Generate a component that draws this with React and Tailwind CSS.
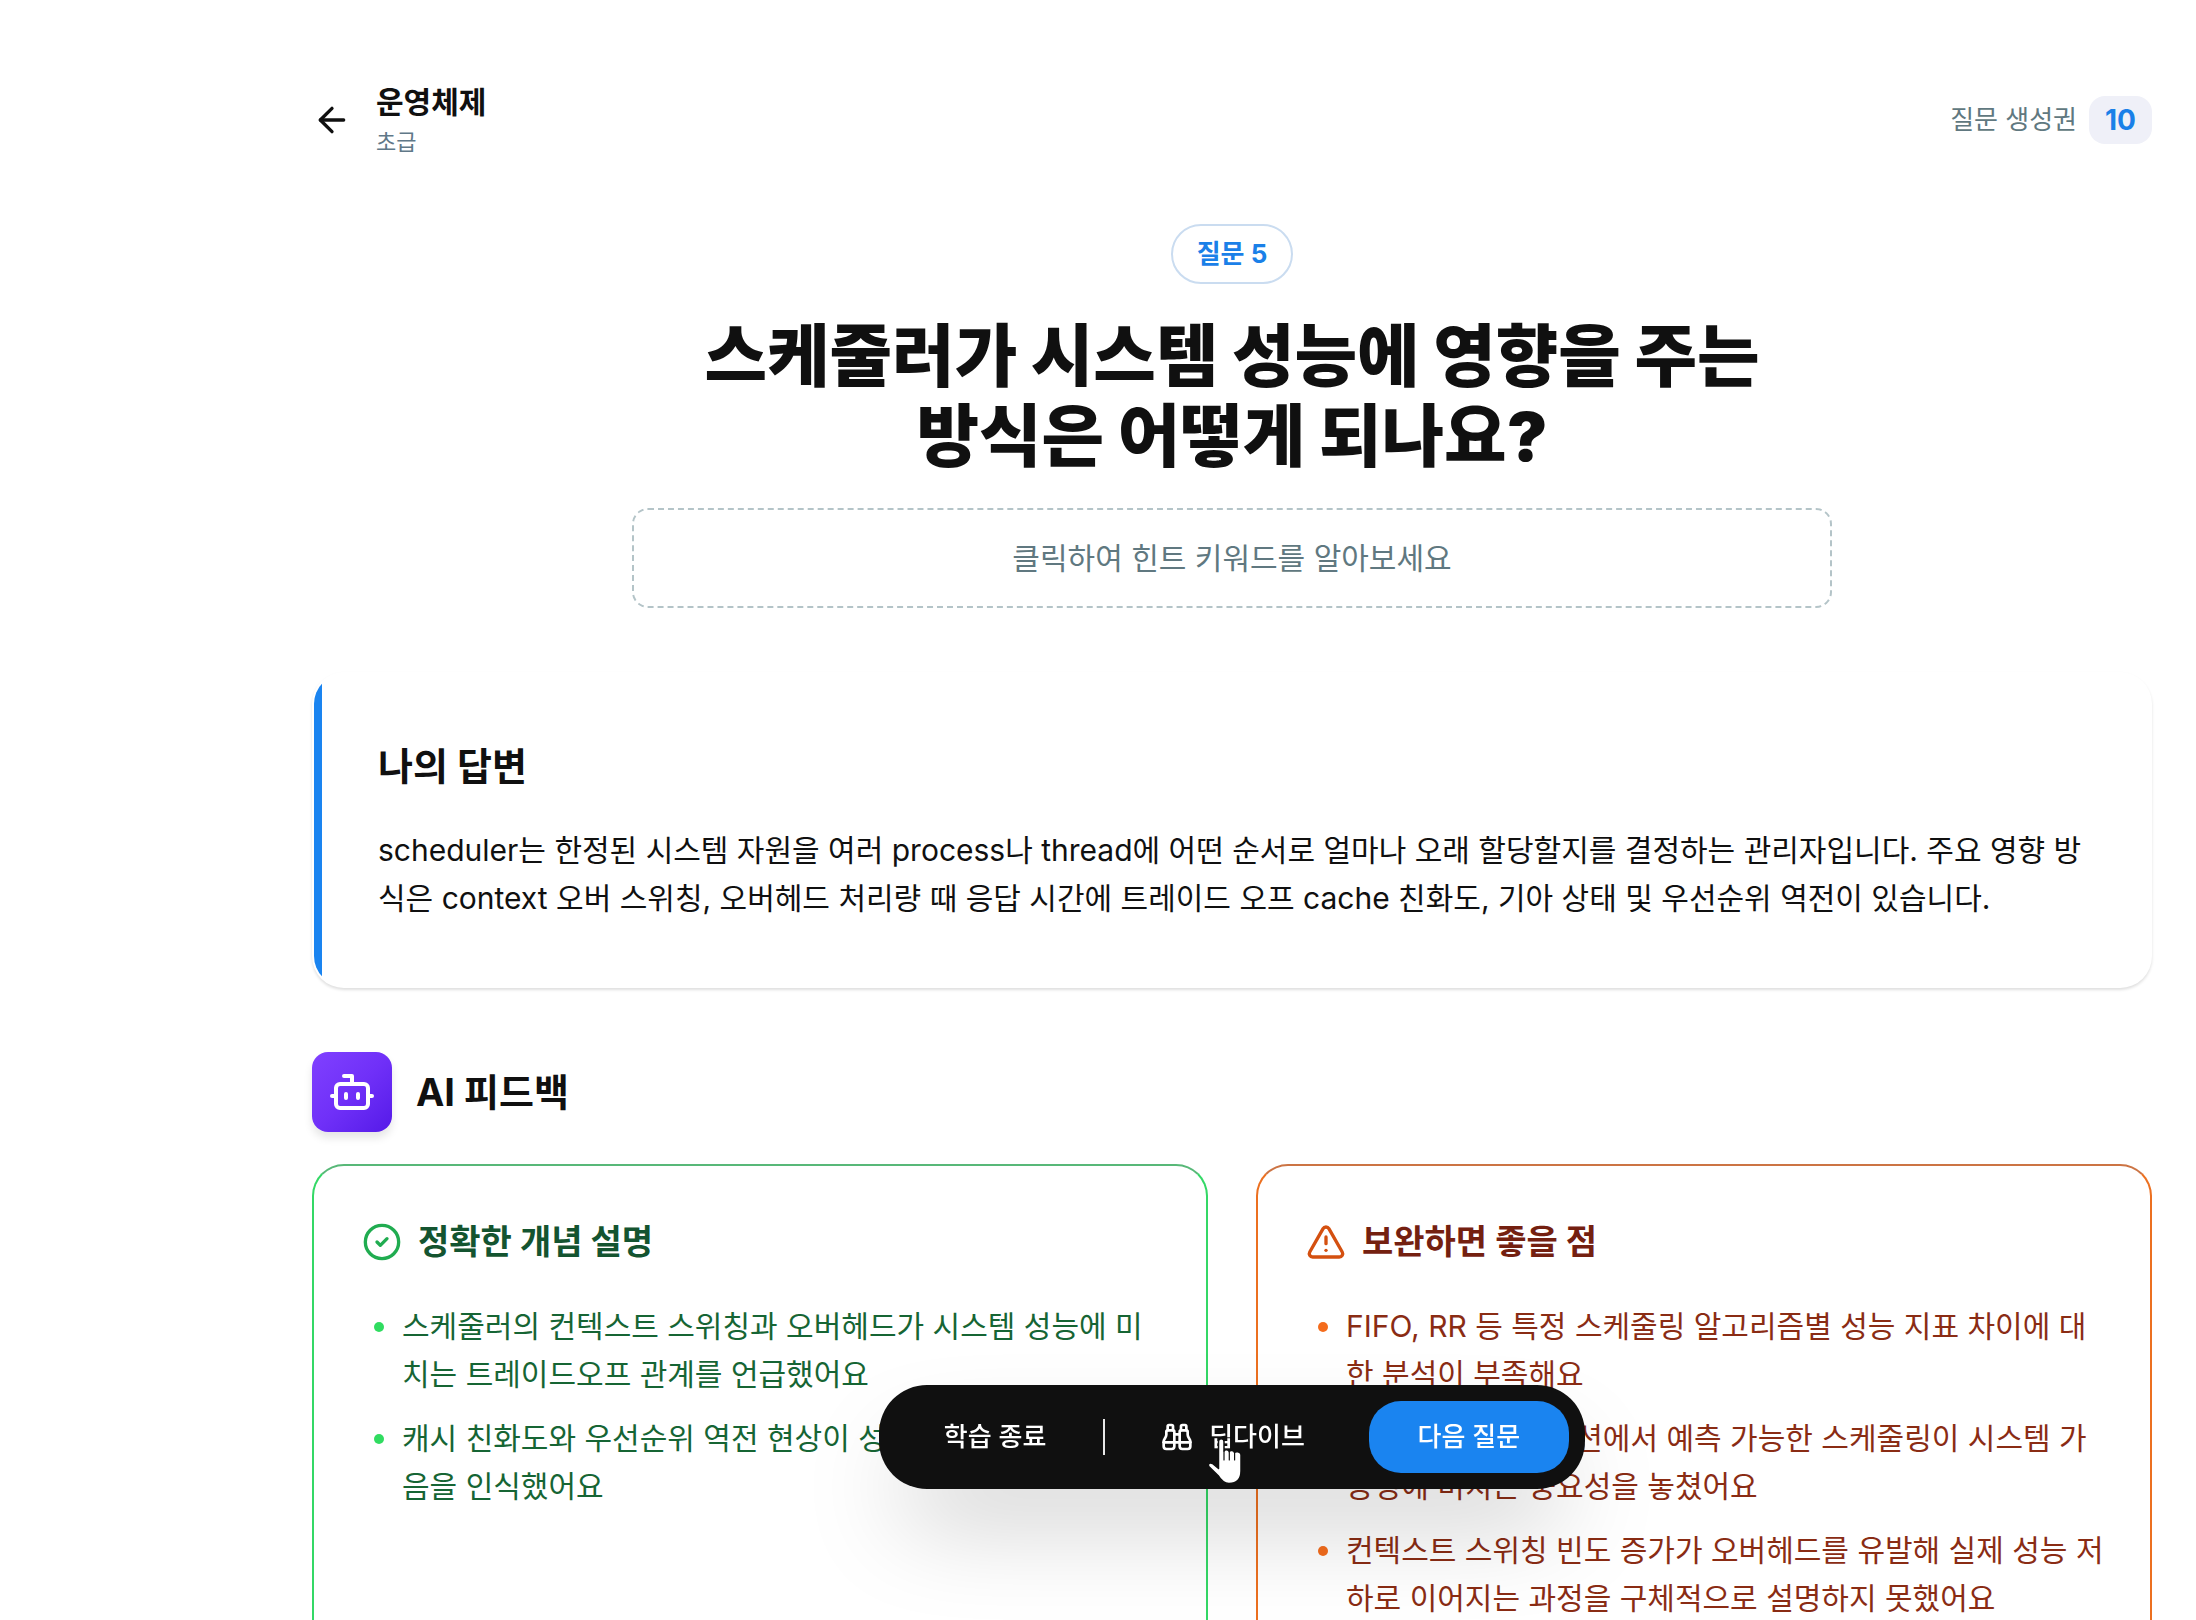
import React from 'react';
import { ArrowLeft, Binoculars, Bot, CircleCheck, TriangleAlert } from 'lucide-react';

const goodPoints = [
  '스케줄러의 컨텍스트 스위칭과 오버헤드가 시스템 성능에 미치는 트레이드오프 관계를 언급했어요',
  '캐시 친화도와 우선순위 역전 현상이 성능에 영향을 줄 수 있음을 인식했어요',
];

const improvePoints = [
  'FIFO, RR 등 특정 스케줄링 알고리즘별 성능 지표 차이에 대한 분석이 부족해요',
  '실시간 애플리케이션에서 예측 가능한 스케줄링이 시스템 가용성에 미치는 중요성을 놓쳤어요',
  '컨텍스트 스위칭 빈도 증가가 오버헤드를 유발해 실제 성능 저하로 이어지는 과정을 구체적으로 설명하지 못했어요',
];

const Header = () => (
  <header className="flex items-center justify-between">
    <div className="flex items-center gap-6">
      <button type="button" aria-label="뒤로 가기" className="text-[#101010]">
        <ArrowLeft size={40} />
      </button>
      <div>
        <h2 className="text-[30px] leading-[44px] font-bold">운영체제</h2>
        <p className="text-[22px] leading-[36px] text-[#607888]">초급</p>
      </div>
    </div>
    <div className="flex items-center gap-3">
      <span className="text-[26px] leading-[40px] text-[#607880]">질문 생성권</span>
      <span className="rounded-2xl bg-[#eff0f8] px-4 text-[28px] leading-[48px] font-bold text-[#1a80e8]">10</span>
    </div>
  </header>
);

const Question = () => (
  <section className="mt-16 flex flex-col items-center">
    <span className="rounded-full border-2 border-[#cadcf0] px-6 text-[26px] leading-[56px] font-bold text-[#1a80e8]">
      질문 5
    </span>
    <h1 className="mt-8 text-center text-[68px] leading-[80px] font-black">
      스케줄러가 시스템 성능에 영향을 주는
      <br />
      방식은 어떻게 되나요?
    </h1>
    <button
      type="button"
      className="mt-8 h-[100px] w-full max-w-[1200px] rounded-2xl border-2 border-dashed border-[#b4c4c8] text-[30px] text-[#607880]"
    >
      클릭하여 힌트 키워드를 알아보세요
    </button>
  </section>
);

const MyAnswer = () => (
  <section className="mt-16 flex overflow-hidden rounded-[32px] border-2 border-transparent shadow-[0_2px_3px_rgba(0,0,0,0.13)]">
    <div className="w-2 shrink-0 bg-[#1a84f0]" />
    <div className="py-16 pr-16 pl-14">
      <h2 className="text-[38px] leading-[56px] font-bold">나의 답변</h2>
      <p className="mt-8 text-[30px] leading-[48px]">
        scheduler는 한정된 시스템 자원을 여러 process나 thread에 어떤 순서로 얼마나 오래 할당할지를 결정하는
        관리자입니다. 주요 영향 방식은 context 오버 스위칭, 오버헤드 처리량 때 응답 시간에 트레이드 오프 cache
        친화도, 기아 상태 및 우선순위 역전이 있습니다.
      </p>
    </div>
  </section>
);

const FeedbackCard = ({ title, icon, points, border, heading, text, dot }) => (
  <article className={`min-h-[640px] rounded-[32px] border-2 py-12 pr-10 pl-12 ${border}`}>
    <div className="flex items-center gap-4">
      {icon}
      <h3 className={`text-[34px] leading-[56px] font-bold ${heading}`}>{title}</h3>
    </div>
    <ul className="mt-8 flex flex-col gap-4">
      {points.map((point) => (
        <li key={point} className={`flex gap-[18px] pl-3 text-[30px] leading-[48px] ${text}`}>
          <span className={`mt-5 size-2.5 shrink-0 rounded-full ${dot}`} />
          <span>{point}</span>
        </li>
      ))}
    </ul>
  </article>
);

const Feedback = () => (
  <section className="mt-16">
    <div className="flex items-center gap-6">
      <div className="flex size-20 items-center justify-center rounded-2xl bg-linear-to-br from-[#8040ff] via-[#7030f8] to-[#5518e8] text-white shadow-[0_6px_8px_rgba(0,0,0,0.1)]">
        <Bot size={48} />
      </div>
      <h2 className="text-[38px] leading-[56px] font-bold">AI 피드백</h2>
    </div>
    <div className="mt-8 grid grid-cols-2 gap-12">
      <FeedbackCard
        title="정확한 개념 설명"
        icon={<CircleCheck size={40} className="text-[#20ac50]" />}
        points={goodPoints}
        border="border-[#34d866] border-t-[#58b878]"
        heading="text-[#145430]"
        text="text-[#166534]"
        dot="bg-[#30dc60]"
      />
      <FeedbackCard
        title="보완하면 좋을 점"
        icon={<TriangleAlert size={40} className="text-[#d45010]" />}
        points={improvePoints}
        border="border-[#ec7020] border-t-[#cc7444]"
        heading="text-[#742010]"
        text="text-[#8a2c14]"
        dot="bg-[#f46c1c]"
      />
    </div>
  </section>
);

const HandCursor = () => (
  <svg className="absolute top-[52px] left-[328px] h-12 w-9" viewBox="0 0 36 48" fill="none" aria-hidden="true">
    <path
      d="M11.5 4.5c0-3.6 5.500-3.600 5.500 0V14c.6-2 5-1.800 5.200.6.8-1.800 5-1.400 5.300 1 .9-1.400 6-1.400 6.500 2V34c0 8-4 12.500-12 12.500-5 0-8-3-11-8L1.800 29.500C.5 26.500 3 25 5.500 26.500l6 5z"
      fill="#fff"
      stroke="#101010"
      strokeWidth="1.5"
      strokeLinejoin="round"
    />
    <path d="M17 14v9M22.300 15v8M27.600 16v7" stroke="#101010" strokeWidth="1.200" strokeLinecap="round" />
  </svg>
);

const ActionBar = () => (
  <div className="fixed right-11 bottom-[131px] left-[312px] flex justify-center">
    <div className="relative flex items-center rounded-[48px] bg-[#101010] p-4 text-[26px] leading-[40px] font-medium text-white shadow-[0_50px_100px_-24px_rgba(0,0,0,0.25)]">
      <button type="button" className="h-[72px] min-w-[200px] px-12">
        학습 종료
      </button>
      <div className="mx-2 h-9 w-0.5 bg-[#e8e8e8]" />
      <button type="button" className="mr-4 flex h-[72px] items-center gap-4 px-12">
        <Binoculars size={32} />
        딥다이브
      </button>
      <button type="button" className="h-[72px] min-w-[200px] rounded-[32px] bg-[#1a84f0] px-12">
        다음 질문
      </button>
      <HandCursor />
    </div>
  </div>
);

const App = () => {
  return (
    <div className="h-screen overflow-hidden bg-white font-['Inter','Noto_Sans_CJK_KR',sans-serif] text-[#101010]">
      <main className="pt-20 pr-11 pl-[312px]">
        <Header />
        <Question />
        <MyAnswer />
        <Feedback />
      </main>
      <ActionBar />
    </div>
  );
};

export default App;
